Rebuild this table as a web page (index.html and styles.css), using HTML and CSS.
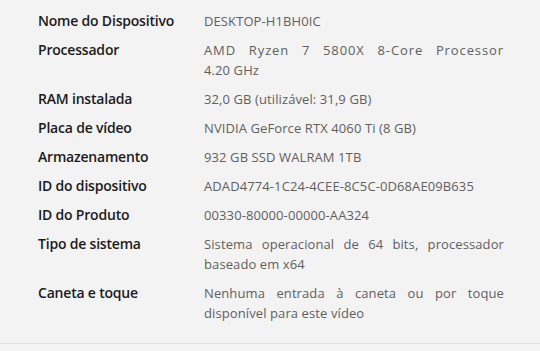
FILE: index.html
```html
<!DOCTYPE html>
<html lang="pt">
<head>
<meta charset="utf-8">
<link rel="stylesheet" href="styles.css">
</head>
<body>
<div class="panel">
  <dl class="specs">
    <div class="row"><dt>Nome do Dispositivo</dt><dd>DESKTOP-H1BH0IC</dd></div>
    <div class="row"><dt>Processador</dt><dd><span class="full-line">AMD Ryzen 7 5800X 8-Core Processor</span>4.20 GHz</dd></div>
    <div class="row"><dt>RAM instalada</dt><dd>32,0 GB (utilizável: 31,9 GB)</dd></div>
    <div class="row"><dt>Placa de vídeo</dt><dd>NVIDIA GeForce RTX 4060 Ti (8 GB)</dd></div>
    <div class="row"><dt>Armazenamento</dt><dd>932 GB SSD WALRAM 1TB</dd></div>
    <div class="row"><dt>ID do dispositivo</dt><dd>ADAD4774-1C24-4CEE-8C5C-0D68AE09B635</dd></div>
    <div class="row"><dt>ID do Produto</dt><dd>00330-80000-00000-AA324</dd></div>
    <div class="row"><dt>Tipo de sistema</dt><dd>Sistema operacional de 64 bits, processador baseado em x64</dd></div>
    <div class="row"><dt>Caneta e toque</dt><dd>Nenhuma entrada à caneta ou por toque disponível para este vídeo</dd></div>
  </dl>
  <div class="divider"></div>
</div>
</body>
</html>
```
FILE: styles.css
```css
html, body {
  margin: 0;
  padding: 0;
  background: #f3f3f3;
}
body {
  width: 540px;
  height: 351px;
  overflow: hidden;
  font-family: "Open Sans", "Noto Sans", sans-serif;
  font-size: 13px;
}
.panel {
  display: flex;
  flex-direction: column;
  height: 351px;
}
.specs {
  margin: 0;
  padding: 11px 0 0 38px;
  display: flex;
  flex-direction: column;
  gap: 9px;
}
.row {
  display: flex;
  line-height: 20px;
}
dt {
  width: 166px;
  flex: none;
  font-size: 14px;
  font-weight: 600;
  letter-spacing: -0.2px;
  color: #1b1b1b;
}
dd {
  margin: 0;
  width: 300px;
  color: #5f5f5f;
  letter-spacing: 0.1px;
  text-align: justify;
}
.full-line {
  display: block;
  letter-spacing: 0.9px;
  text-align: justify;
  text-align-last: justify;
}
.divider {
  margin-top: auto;
  margin-bottom: 7px;
  height: 1px;
  background: #e0e0e0;
}
```
